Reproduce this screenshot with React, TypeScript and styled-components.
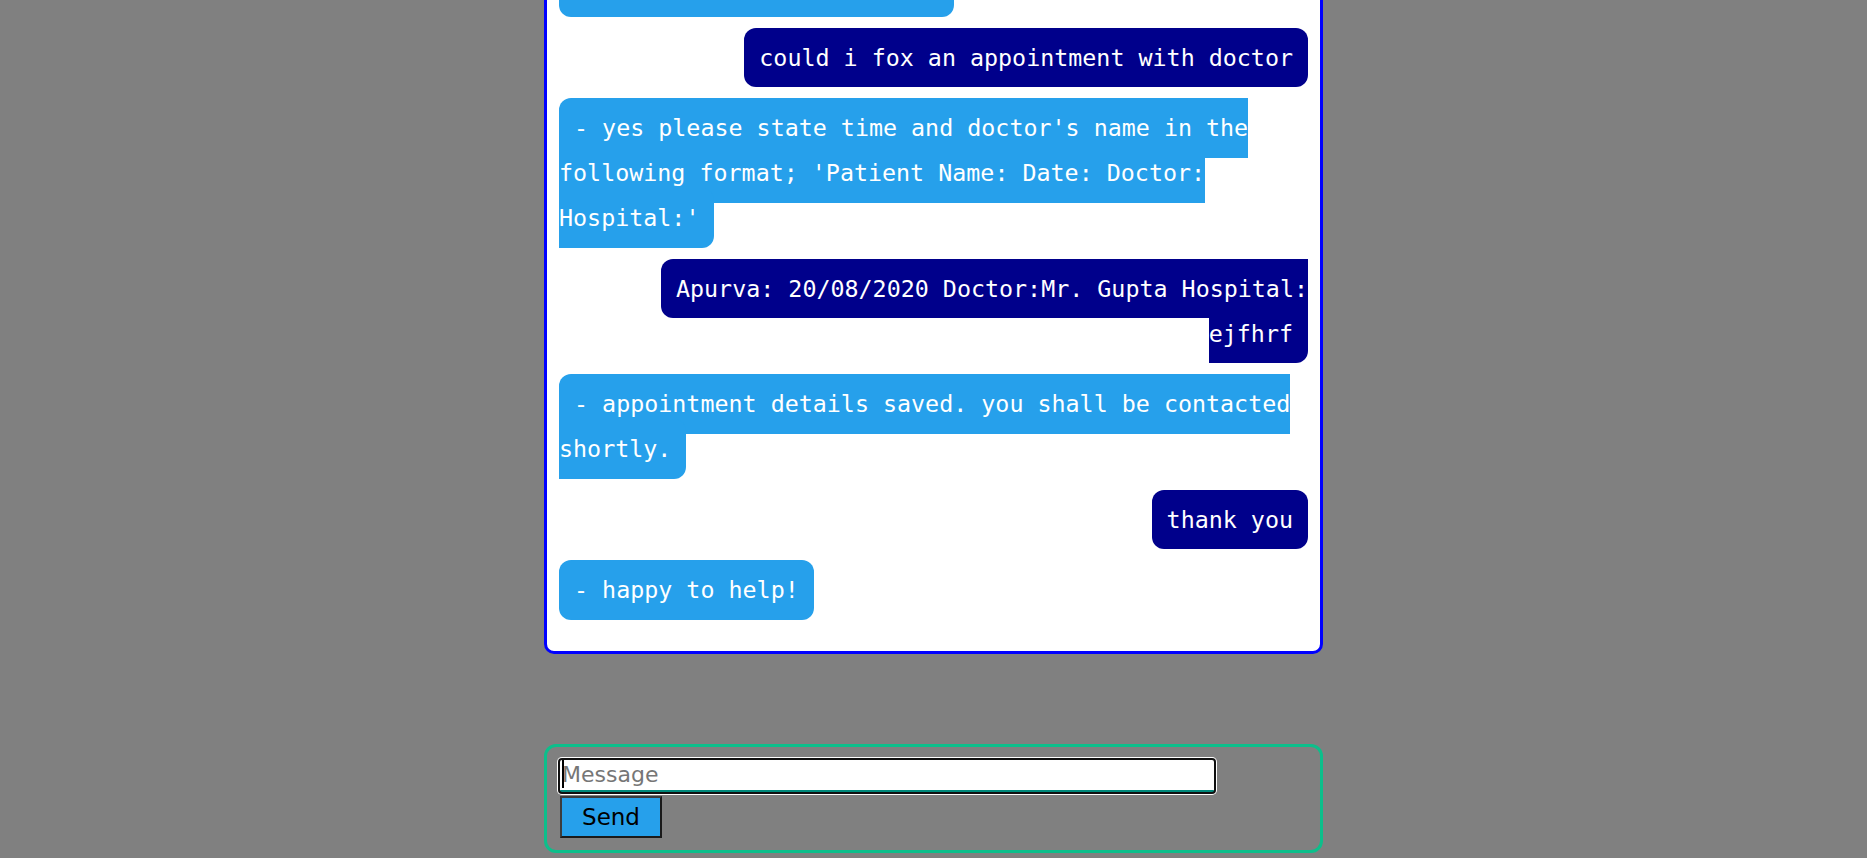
import React from "react";
import styled, { createGlobalStyle } from "styled-components";

type Sender = "bot" | "user";

interface Message {
  from: Sender;
  text: string;
}

const messages: Message[] = [
  { from: "user", text: "hello" },
  { from: "bot", text: "- hello! how can i assist?" },
  { from: "user", text: "could i fox an appointment with doctor" },
  {
    from: "bot",
    text: "- yes please state time and doctor's name in the following format; 'Patient Name: Date: Doctor: Hospital:'",
  },
  { from: "user", text: "Apurva: 20/08/2020 Doctor:Mr. Gupta Hospital: ejfhrf" },
  { from: "bot", text: "- appointment details saved. you shall be contacted shortly." },
  { from: "user", text: "thank you" },
  { from: "bot", text: "- happy to help!" },
];

const GlobalStyle = createGlobalStyle`
  html, body {
    margin: 0;
    padding: 0;
    background: #808080;
  }
  body {
    overflow: hidden;
  }
`;

const Page = styled.div`
  height: 100vh;
  box-sizing: border-box;
  overflow: hidden;
  display: flex;
  flex-direction: column;
  align-items: center;
  justify-content: flex-end;
  padding-bottom: 5.5px;
`;

const ChatBox = styled.div`
  flex-shrink: 0;
  width: 779px;
  box-sizing: border-box;
  margin-bottom: 90px;
  padding: 12px;
  background: #ffffff;
  border: 3px solid #0000ff;
  border-radius: 10px;
  font-family: "DejaVu Sans Mono", "Liberation Mono", monospace;
  font-size: 23.33px;
  line-height: 45px;
`;

const Row = styled.div<{ $from: Sender }>`
  text-align: ${(p) => (p.$from === "user" ? "right" : "left")};
  margin-bottom: 25.5px;
`;

const Bubble = styled.span<{ $from: Sender }>`
  background: ${(p) => (p.$from === "user" ? "#00008b" : "#26a0eb")};
  color: #ffffff;
  padding: 15.6px 15px;
  border-radius: 12px;
`;

const Composer = styled.form`
  flex-shrink: 0;
  width: 779px;
  box-sizing: border-box;
  padding: 13px 13px 12px;
  border: 3px solid #0cbf8b;
  border-radius: 12px;
  display: flex;
  flex-direction: column;
  align-items: flex-start;
`;

const InputWrap = styled.div`
  position: relative;
  margin: 0 0 4.4px;
`;

const MessageInput = styled.input`
  display: block;
  width: 654px;
  height: 32px;
  box-sizing: border-box;
  margin: 0;
  padding: 1px 2px;
  border: none;
  border-bottom: 2px solid #00897b;
  border-radius: 2px;
  background: #ffffff;
  color: #000000;
  caret-color: #000000;
  font-family: "DejaVu Sans", sans-serif;
  font-size: 22px;
  outline: none;
  box-shadow: 0 0 0 2px #101010, 0 0 0 3px #ffffff;

  &::placeholder {
    color: #767676;
  }
`;

const Caret = styled.span`
  position: absolute;
  left: 2.4px;
  top: 0;
  width: 2px;
  height: 28.5px;
  background: #000000;
  pointer-events: none;
`;

const SendButton = styled.button`
  width: 102px;
  height: 41.6px;
  box-sizing: border-box;
  margin: 0;
  padding: 0;
  background: #26a0eb;
  border: 2px solid;
  border-color: #3c3c3c #1a1a1a #1a1a1a #3c3c3c;
  color: #000000;
  font-family: "DejaVu Sans", sans-serif;
  font-size: 23px;
`;

export default function App() {
  return (
    <>
      <GlobalStyle />
      <Page>
        <ChatBox>
          {messages.map((m, i) => (
            <Row key={i} $from={m.from}>
              <Bubble $from={m.from}>{m.text}</Bubble>
            </Row>
          ))}
        </ChatBox>
        <Composer onSubmit={(e) => e.preventDefault()}>
          <InputWrap>
            <MessageInput type="text" placeholder="Message" />
            <Caret />
          </InputWrap>
          <SendButton type="submit">Send</SendButton>
        </Composer>
      </Page>
    </>
  );
}
